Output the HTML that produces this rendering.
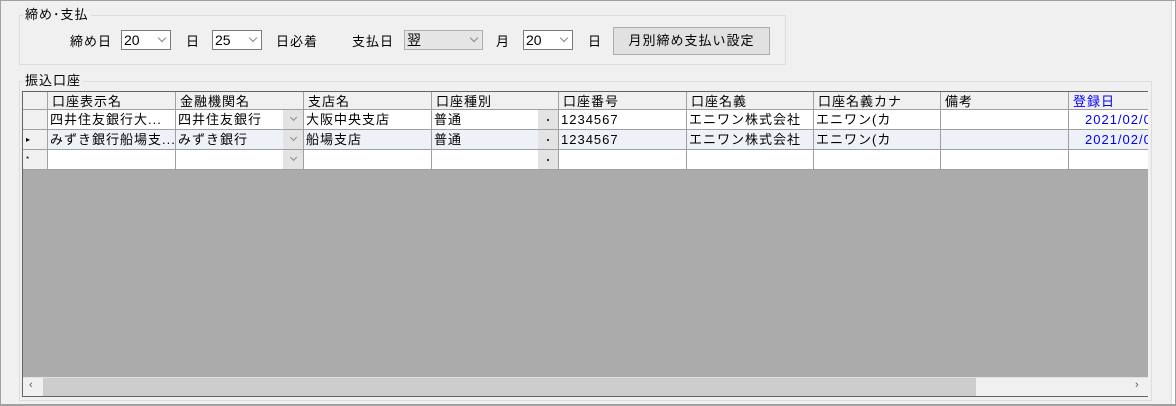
<!DOCTYPE html>
<html><head><meta charset="utf-8"><style>
*{box-sizing:border-box;margin:0;padding:0}
body{width:1176px;height:406px;background:#f0f0f0;position:relative;overflow:hidden;font-family:"Liberation Sans","Noto Sans CJK JP",sans-serif;font-size:13px;color:#000;letter-spacing:1px}
.a{position:absolute}
.frame{left:0;top:0;width:1176px;height:406px;border:1px solid #a0a0a0;border-bottom:2px solid #a0a0a0}
.rl{left:1171px;top:1px;width:1px;height:403px;background:#dcdcdc}
.rw{left:1172px;top:1px;width:3px;height:403px;background:#fff}
.gb{border:1px solid #dcdcdc}
.lbl{background:#f0f0f0;padding:0 2px;line-height:16px}
.t{line-height:18px;white-space:nowrap}
.cb{border:1px solid #7a7a7a;background:#fff;height:20px;line-height:18px;padding-left:2px;font-size:14px;letter-spacing:0}
.ar{position:absolute;right:5px;top:4px;width:6px;height:6px;border-right:1px solid #888;border-bottom:1px solid #888;transform:rotate(45deg)}
.btn{border:1px solid #adadad;background:#e1e1e1;text-align:center;line-height:25px}
.grid{left:22px;top:91px;width:1126px;height:306px;border:1px solid #646464;border-right:none;background:#ababab;overflow:hidden}
.c{position:absolute;border-right:1px solid #a0a0a0;border-bottom:1px solid #a0a0a0;padding-left:4px;line-height:19px;white-space:nowrap;overflow:hidden}
.dd{position:absolute;background:#e3e3e3}
</style></head><body>
<div class="a frame"></div>
<div class="a rl"></div><div class="a rw"></div>
<div class="a gb" style="left:19px;top:15px;width:767px;height:50px"></div>
<div class="a lbl" style="left:23px;top:7px">締め･支払</div>
<div class="a t" style="left:70px;top:33px">締め日</div>
<div class="a cb" style="left:121px;top:30px;width:50px">20<span class="ar"></span></div>
<div class="a t" style="left:186px;top:33px">日</div>
<div class="a cb" style="left:212px;top:30px;width:50px">25<span class="ar"></span></div>
<div class="a t" style="left:276px;top:33px">日必着</div>
<div class="a t" style="left:352px;top:33px">支払日</div>
<div class="a cb" style="left:404px;top:30px;width:79px;background:#e5e5e5;border-color:#adadad">翌<span class="ar"></span></div>
<div class="a t" style="left:496px;top:33px">月</div>
<div class="a cb" style="left:523px;top:30px;width:50px">20<span class="ar"></span></div>
<div class="a t" style="left:588px;top:33px">日</div>
<div class="a btn" style="left:613px;top:27px;width:157px;height:28px">月別締め支払い設定</div>
<div class="a gb" style="left:19px;top:81px;width:1133px;height:320px"></div>
<div class="a lbl" style="left:23px;top:73px">振込口座</div>
<div class="a grid">
<div id="g"></div>
</div>
<script>
var cols=[0,25,153,281,409,536,664,791,918,1046,1160];
var hdr=["","口座表示名","金融機関名","支店名","口座種別","口座番号","口座名義","口座名義カナ","備考","登録日"];
var r1=["","四井住友銀行大...","四井住友銀行","大阪中央支店","普通","1234567","エニワン株式会社","エニワン(カ","","2021/02/0"];
var r2=["▸","みずき銀行船場支...","みずき銀行","船場支店","普通","1234567","エニワン株式会社","エニワン(カ","","2021/02/0"];
var r3=["*","","","","","","","","",""];
var rows=[[hdr,0,18,"#f0f0f0"],[r1,18,20,"#fff"],[r2,38,20,"#eef2f8"],[r3,58,20,"#fff"]];
var h="";
rows.forEach(function(r,ri){
 for(var i=0;i<10;i++){
  var bg=(i==0)?"#f0f0f0":r[3];
  var txt=r[0][i];var st="";
  if(i==0&&ri>0){st="font-size:8px;padding-left:3px;";}
  if(i==9){st+="color:#0000ff;"; if(ri>0) st+="padding-left:16px;";}
  if(ri>0&&i>0&&i<9) st+="padding-left:2px;";
  h+='<div class="c" style="left:'+cols[i]+'px;top:'+r[1]+'px;width:'+(cols[i+1]-cols[i])+'px;height:'+r[2]+'px;background:'+bg+';'+st+'">'+txt+'</div>';
 }
 if(ri>0){
  h+='<div class="dd" style="left:260px;top:'+(r[1])+'px;width:20px;height:19px"><span class="ar" style="right:7px;top:5px;width:5px;height:5px"></span></div>';
  h+='<div class="dd" style="left:515px;top:'+(r[1])+'px;width:20px;height:19px"><span class="a" style="left:9px;top:9px;width:2px;height:2px;background:#333"></span></div>';
 }
});
h+='<div class="a" style="left:0;top:285px;width:1126px;height:20px;background:#f0f0f0;border-top:1px solid #e0e0e0"></div>';
h+='<div class="a" style="left:20px;top:286px;width:933px;height:18px;background:#cdcdcd"></div>';
h+='<div class="a" style="left:6px;top:287px;font-size:11px;color:#555">&lsaquo;</div>';
h+='<div class="a" style="left:1112px;top:287px;font-size:11px;color:#555">&rsaquo;</div>';
document.getElementById("g").innerHTML=h;
</script>
</body></html>
